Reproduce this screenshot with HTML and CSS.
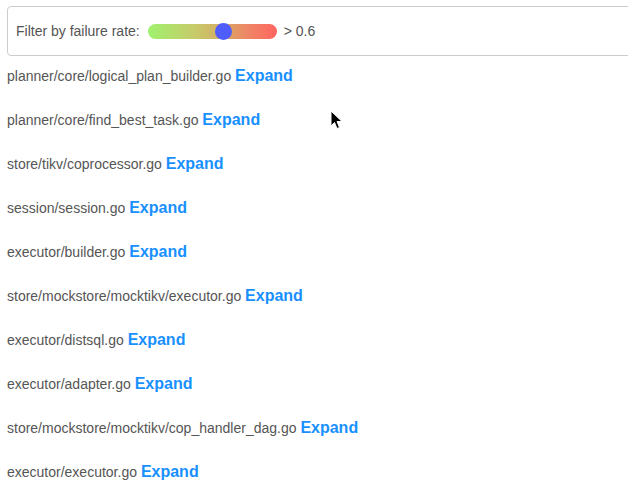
FILE: index.html
```html
<!DOCTYPE html>
<html>
<head>
<meta charset="utf-8">
<link rel="stylesheet" href="styles.css">
</head>
<body>
<div class="page">
  <div class="filter">
    <span class="label">Filter by failure rate:</span>
    <div class="slider"><div class="thumb"></div></div>
    <span class="value">&gt; 0.6</span>
  </div>
  <div class="list">
    <div class="row"><span class="path">planner/core/logical_plan_builder.go</span> <a class="expand">Expand</a></div>
    <div class="row"><span class="path">planner/core/find_best_task.go</span> <a class="expand">Expand</a></div>
    <div class="row"><span class="path">store/tikv/coprocessor.go</span> <a class="expand">Expand</a></div>
    <div class="row"><span class="path">session/session.go</span> <a class="expand">Expand</a></div>
    <div class="row"><span class="path">executor/builder.go</span> <a class="expand">Expand</a></div>
    <div class="row"><span class="path">store/mockstore/mocktikv/executor.go</span> <a class="expand">Expand</a></div>
    <div class="row"><span class="path">executor/distsql.go</span> <a class="expand">Expand</a></div>
    <div class="row"><span class="path">executor/adapter.go</span> <a class="expand">Expand</a></div>
    <div class="row"><span class="path">store/mockstore/mocktikv/cop_handler_dag.go</span> <a class="expand">Expand</a></div>
    <div class="row"><span class="path">executor/executor.go</span> <a class="expand">Expand</a></div>
  </div>
</div>
<svg class="cursor" width="14" height="20" viewBox="0 0 14 20">
  <path d="M1 1 L1 16 L4.5 12.5 L7 18.5 L9.5 17.5 L7 11.5 L12 11.5 Z" fill="#000" stroke="#fff" stroke-width="1"/>
</svg>
</body>
</html>
```
FILE: styles.css
```css
html, body {
  margin: 0;
  padding: 0;
  background: #fff;
  overflow: hidden;
}
body {
  font-family: "Liberation Sans", Arial, Helvetica, sans-serif;
  color: #555;
  font-size: 14px;
  position: relative;
  width: 628px;
  height: 492px;
}
.page {
  padding: 6px 0 0 7px;
}
.filter {
  width: 640px;
  height: 48px;
  border: 1px solid #ccc;
  border-radius: 4px;
  display: flex;
  align-items: center;
  padding-left: 8px;
  box-sizing: content-box;
}
.label {
  margin-right: 8px;
}
.slider {
  position: relative;
  width: 129px;
  height: 15px;
  border-radius: 8px;
  background: linear-gradient(to right, #9ff26e 0%, #c6cc6a 35%, #d4b064 55%, #ec8a66 75%, #ff6460 100%);
  margin-right: 7px;
}
.thumb {
  position: absolute;
  left: 67px;
  top: -1px;
  width: 17px;
  height: 17px;
  border-radius: 50%;
  background: #4f5dff;
}
.list {
  display: flex;
  flex-direction: column;
  padding-top: 10px;
}
.row {
  height: 44px;
  line-height: 20px;
}
.expand {
  color: #1890ff;
  font-weight: bold;
  font-size: 16px;
}
.cursor {
  position: absolute;
  left: 330px;
  top: 110px;
}
```
